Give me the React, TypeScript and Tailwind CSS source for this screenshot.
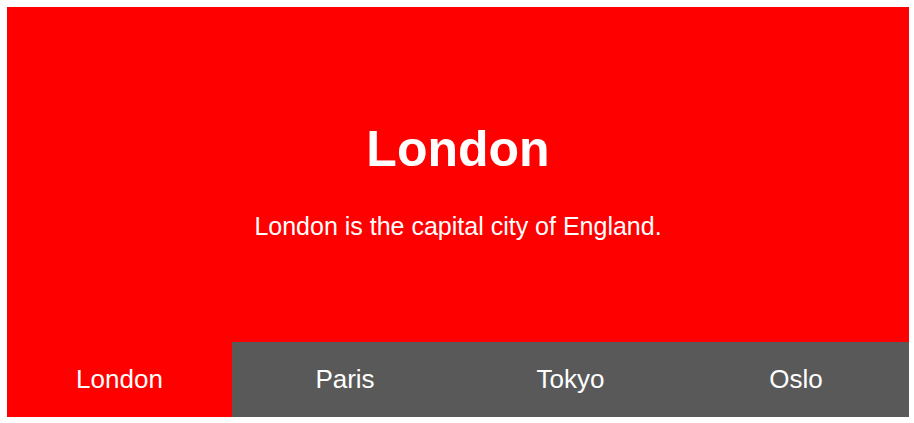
import React, { useState } from "react";

const cities = [
  { name: "London", text: "London is the capital city of England.", color: "bg-[#ff0000]" },
  { name: "Paris", text: "Paris is the capital of France.", color: "bg-[#008000]" },
  { name: "Tokyo", text: "Tokyo is the capital of Japan.", color: "bg-[#0000ff]" },
  { name: "Oslo", text: "Oslo is the capital of Norway.", color: "bg-[#ffa500]" },
];

export default function App() {
  const [active, setActive] = useState(0);
  const city = cities[active];
  return (
    <div className="bg-white w-[914px] h-[423px] pt-[7px] pl-[7px] font-['Liberation_Sans',Arial,sans-serif]">
      <div className="w-[902px] flex flex-col">
        <div className={`${city.color} h-[335px] pt-[13px] flex flex-col items-center justify-center text-white`}>
          <h1 className="text-[50px] leading-none font-bold">{city.name}</h1>
          <p className="text-[25px] leading-none mt-[40px]">{city.text}</p>
        </div>
        <div className="grid grid-cols-[225px_226px_225px_226px] h-[75px]">
          {cities.map((c, i) => (
            <button
              key={c.name}
              onClick={() => setActive(i)}
              className={`${i === active ? c.color : "bg-[#595959]"} text-white text-[26px] flex items-center justify-center`}
            >
              {c.name}
            </button>
          ))}
        </div>
      </div>
    </div>
  );
}
